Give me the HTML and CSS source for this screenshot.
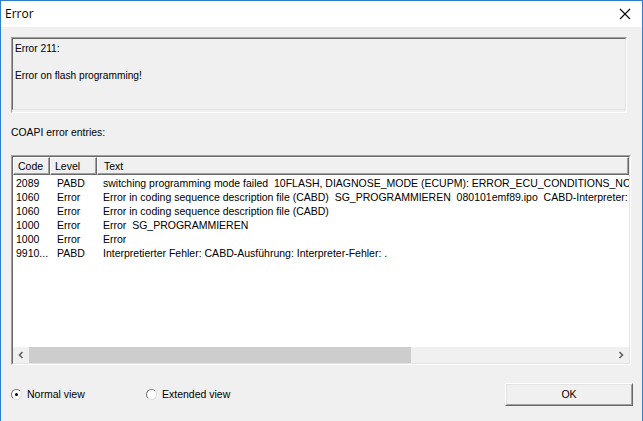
FILE: index.html
```html
<!DOCTYPE html>
<html>
<head>
<meta charset="utf-8">
<link rel="stylesheet" href="styles.css">
</head>
<body>
<div class="window">
  <div class="titlebar">
    <span class="title">Error</span>
    <svg class="close" width="12" height="12" viewBox="0 0 12 12"><path d="M1 1 L11 11 M11 1 L1 11" stroke="#000" stroke-width="1.1" fill="none"/></svg>
  </div>
  <div class="content">
    <div class="msgbox">
      <div class="msgbox-inner">
        <div class="line">Error 211:</div>
        <div class="line gap">Error on flash programming!</div>
      </div>
    </div>
    <div class="label">COAPI error entries:</div>
    <div class="list">
      <div class="list-inner">
        <div class="rows">
          <div class="row header">
            <div class="hcell c1">Code</div>
            <div class="hcell c2">Level</div>
            <div class="hcell c3">Text</div>
          </div>
          <div class="row"><div class="cell c1">2089</div><div class="cell c2">PABD</div><div class="cell c3">switching programming mode failed  10FLASH, DIAGNOSE_MODE (ECUPM): ERROR_ECU_CONDITIONS_NOT_CORRECT</div></div>
          <div class="row"><div class="cell c1">1060</div><div class="cell c2">Error</div><div class="cell c3">Error in coding sequence description file (CABD)  SG_PROGRAMMIEREN  080101emf89.ipo  CABD-Interpreter: </div></div>
          <div class="row"><div class="cell c1">1060</div><div class="cell c2">Error</div><div class="cell c3">Error in coding sequence description file (CABD)</div></div>
          <div class="row"><div class="cell c1">1000</div><div class="cell c2">Error</div><div class="cell c3">Error  SG_PROGRAMMIEREN</div></div>
          <div class="row"><div class="cell c1">1000</div><div class="cell c2">Error</div><div class="cell c3">Error</div></div>
          <div class="row"><div class="cell c1">9910...</div><div class="cell c2">PABD</div><div class="cell c3">Interpretierter Fehler: CABD-Ausführung: Interpreter-Fehler: .</div></div>
        </div>
        <div class="hscroll">
          <div class="arrow"><svg width="8" height="8" viewBox="0 0 8 8"><path d="M5.5 1 L2.5 4 L5.5 7" stroke="#606060" stroke-width="1.6" fill="none"/></svg></div>
          <div class="track"><div class="thumb"></div></div>
          <div class="arrow"><svg width="8" height="8" viewBox="0 0 8 8"><path d="M2.5 1 L5.5 4 L2.5 7" stroke="#606060" stroke-width="1.6" fill="none"/></svg></div>
        </div>
      </div>
    </div>
    <div class="footer">
      <label class="radio"><span class="dot checked"></span>Normal view</label>
      <label class="radio ext"><span class="dot"></span>Extended view</label>
      <div class="okbtn"><div class="okbtn-inner">OK</div></div>
    </div>
  </div>
</div>
</body>
</html>
```

FILE: styles.css
```css
html, body {
  margin: 0;
  padding: 0;
  background: #f0f0f0;
}
.window {
  width: 641px;
  height: 420px;
  border: 1px solid #2e7fc9;
  border-bottom: none;
  background: #f0f0f0;
  display: flex;
  flex-direction: column;
  font-family: "Liberation Sans", Arial, sans-serif;
  font-size: 10.5px;
  color: #000;
  overflow: hidden;
}
.titlebar {
  height: 26px;
  background: #fff;
  display: flex;
  align-items: center;
  justify-content: space-between;
  padding: 0 11px 0 4px;
  flex: none;
}
.title {
  font-family: "Open Sans", "Noto Sans", sans-serif;
  font-size: 12px;
  position: relative;
  top: -1px;
}
.close {
  display: block;
}
.content {
  padding: 10px 0 0 10px;
  display: flex;
  flex-direction: column;
}
.msgbox {
  width: 614px;
  height: 74px;
  border: 1px solid;
  border-color: #a0a0a0 #fff #fff #a0a0a0;
}
.msgbox-inner {
  height: 72px;
  border: 1px solid;
  border-color: #696969 #e3e3e3 #e3e3e3 #696969;
  padding: 3px 0 0 2px;
  box-sizing: border-box;
  font-size: 10.2px;
}
.line {
  height: 13px;
  line-height: 13px;
}
.gap {
  margin-top: 14px;
}
.label {
  margin-top: 13px;
  height: 13px;
  line-height: 13px;
  font-size: 10.4px;
}
.list {
  margin-top: 16px;
  width: 618px;
  height: 208px;
  border: 1px solid;
  border-color: #a0a0a0 #fff #fff #a0a0a0;
}
.list-inner {
  height: 206px;
  border: 1px solid;
  border-color: #696969 #e3e3e3 #e3e3e3 #696969;
  background: #fff;
  display: flex;
  flex-direction: column;
  overflow: hidden;
}
.rows {
  flex: 1;
  overflow: hidden;
}
.row {
  display: flex;
  height: 14px;
  line-height: 14px;
  white-space: pre;
}
.row.header {
  height: 18px;
  line-height: 16px;
  margin-bottom: 1px;
}
.hcell {
  box-sizing: border-box;
  height: 18px;
  background: #f0f0f0;
  border: 1px solid;
  border-color: #fff #696969 #696969 #fff;
  box-shadow: inset -1px -1px 0 #a0a0a0;
  padding-left: 4px;
  flex: none;
}
.hcell.c3 {
  flex: 1;
  padding-left: 6px;
}
.c1 { width: 37px; flex: none; }
.c2 { width: 47px; flex: none; }
.cell.c1 { padding-left: 3px; box-sizing: border-box; }
.cell.c2 { padding-left: 7px; box-sizing: border-box; }
.cell.c3 { padding-left: 6px; flex: 1; overflow: hidden; }
.hscroll {
  height: 16px;
  display: flex;
  background: #f0f0f0;
  flex: none;
}
.arrow {
  width: 16px;
  display: flex;
  align-items: center;
  justify-content: center;
}
.track {
  flex: 1;
}
.thumb {
  width: 382px;
  height: 16px;
  background: #cdcdcd;
}
.footer {
  display: flex;
  align-items: center;
  height: 22px;
  margin-top: 18px;
  padding-right: 9px;
}
.radio {
  display: flex;
  align-items: center;
  gap: 5px;
  width: 135px;
}
.radio.ext {
  flex: 1;
}
.dot {
  width: 11px;
  height: 11px;
  border-radius: 50%;
  box-sizing: border-box;
  border: 1px solid #555;
  border-color: #777 #ddd #ddd #777;
  background: #fff;
  position: relative;
  flex: none;
}
.dot.checked::after {
  content: "";
  position: absolute;
  left: 3px;
  top: 3px;
  width: 3px;
  height: 3px;
  border-radius: 50%;
  background: #000;
}
.okbtn {
  width: 126px;
  height: 21px;
  border: 1px solid;
  border-color: #fff #696969 #696969 #fff;
  box-sizing: content-box;
}
.okbtn-inner {
  height: 19px;
  border: 1px solid;
  border-color: #e3e3e3 #a0a0a0 #a0a0a0 #e3e3e3;
  text-align: center;
  line-height: 19px;
}
```
